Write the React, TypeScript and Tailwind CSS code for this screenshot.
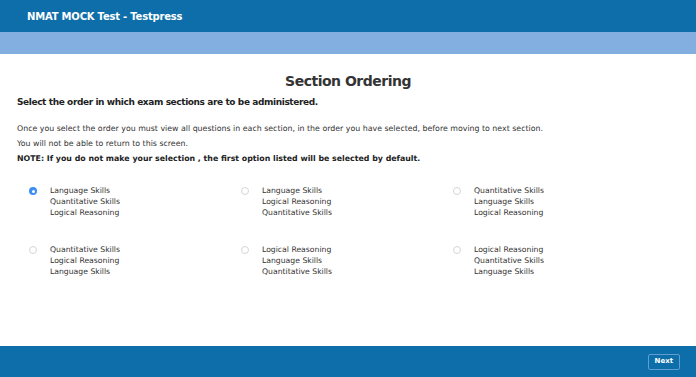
const options = [
  ["Language Skills", "Quantitative Skills", "Logical Reasoning"],
  ["Language Skills", "Logical Reasoning", "Quantitative Skills"],
  ["Quantitative Skills", "Language Skills", "Logical Reasoning"],
  ["Quantitative Skills", "Logical Reasoning", "Language Skills"],
  ["Logical Reasoning", "Language Skills", "Quantitative Skills"],
  ["Logical Reasoning", "Quantitative Skills", "Language Skills"],
];

function Radio({ checked }: { checked: boolean }) {
  if (checked) {
    return (
      <span className="mt-[2px] flex h-[8px] w-[8px] shrink-0 items-center justify-center rounded-full bg-[#3b8ff0]">
        <span className="h-[3px] w-[3px] rounded-full bg-white" />
      </span>
    );
  }
  return (
    <span className="mt-[2px] h-[8px] w-[8px] shrink-0 rounded-full border border-[#d6d6d6] bg-white" />
  );
}

export default function App() {
  return (
    <div
      className="flex h-[377px] w-[696px] flex-col bg-white text-[#333]"
      style={{ fontFamily: '"DejaVu Sans", Verdana, sans-serif' }}
    >
      <header className="flex h-[32px] shrink-0 items-center bg-[#0e6ea9] pl-[27px]">
        <span className="mt-[1px] text-[10px] font-bold tracking-[-0.2px] text-white">
          NMAT MOCK Test - Testpress
        </span>
      </header>
      <div className="h-[22px] shrink-0 bg-[#83afe0]" />

      <main className="flex-1 px-[17px]">
        <h1 className="mt-[18px] text-center text-[14px] font-bold leading-[18px] tracking-[-0.5px] text-[#333]">
          Section Ordering
        </h1>
        <h2 className="mt-[6px] text-[9px] font-bold leading-[12px] tracking-[-0.4px] text-[#222]">
          Select the order in which exam sections are to be administered.
        </h2>
        <div className="mt-[13px] text-[7.85px] leading-[15px]">
          <p>
            Once you select the order you must view all questions in each
            section, in the order you have selected, before moving to next
            section.
          </p>
          <p>You will not be able to return to this screen.</p>
          <p className="font-bold text-[#222]">
            NOTE: If you do not make your selection , the first option listed
            will be selected by default.
          </p>
        </div>

        <div className="mt-[19px] grid grid-cols-[212px_212px_212px] gap-y-[26px] pl-[12px]">
          {options.map((opt, i) => (
            <label key={i} className="flex gap-[13px]">
              <Radio checked={i === 0} />
              <div className="text-[7.7px] leading-[11px]">
                {opt.map((s) => (
                  <div key={s}>{s}</div>
                ))}
              </div>
            </label>
          ))}
        </div>
      </main>

      <footer className="flex h-[31px] shrink-0 items-center justify-end bg-[#0e6ea9] pr-[16px]">
        <button className="h-[16px] rounded-[2px] border border-[#5f9fcf] px-[6px] text-[7px] font-bold text-white">
          Next
        </button>
      </footer>
    </div>
  );
}
